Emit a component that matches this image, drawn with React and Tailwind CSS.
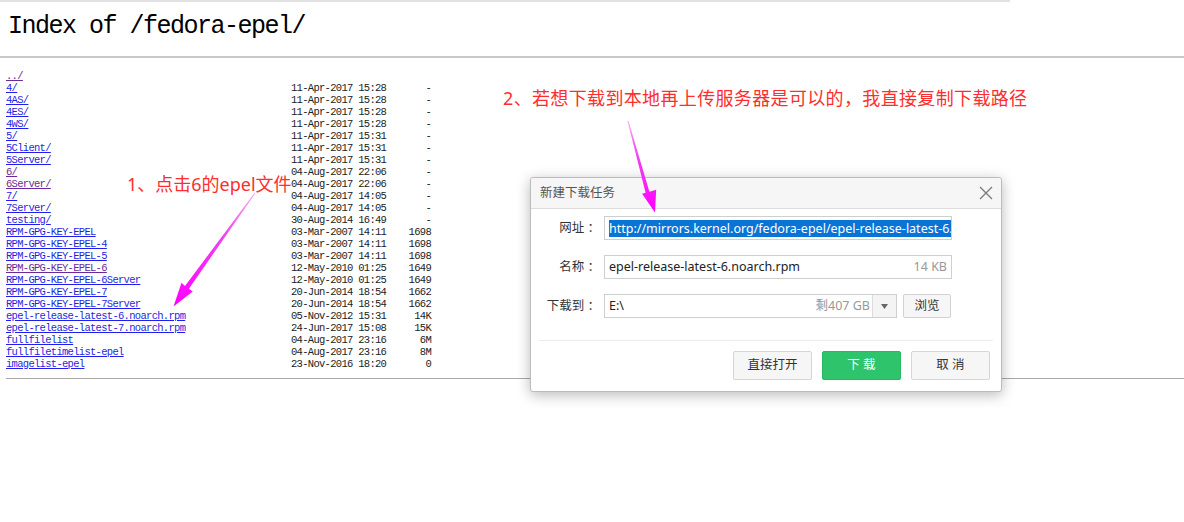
const rows = [
  ["../", "", "", true],
  ["4/", "11-Apr-2017 15:28", "-"],
  ["4AS/", "11-Apr-2017 15:28", "-"],
  ["4ES/", "11-Apr-2017 15:28", "-"],
  ["4WS/", "11-Apr-2017 15:28", "-"],
  ["5/", "11-Apr-2017 15:31", "-"],
  ["5Client/", "11-Apr-2017 15:31", "-"],
  ["5Server/", "11-Apr-2017 15:31", "-"],
  ["6/", "04-Aug-2017 22:06", "-", true],
  ["6Server/", "04-Aug-2017 22:06", "-", true],
  ["7/", "04-Aug-2017 14:05", "-"],
  ["7Server/", "04-Aug-2017 14:05", "-"],
  ["testing/", "30-Aug-2014 16:49", "-"],
  ["RPM-GPG-KEY-EPEL", "03-Mar-2007 14:11", "1698"],
  ["RPM-GPG-KEY-EPEL-4", "03-Mar-2007 14:11", "1698"],
  ["RPM-GPG-KEY-EPEL-5", "03-Mar-2007 14:11", "1698"],
  ["RPM-GPG-KEY-EPEL-6", "12-May-2010 01:25", "1649", true],
  ["RPM-GPG-KEY-EPEL-6Server", "12-May-2010 01:25", "1649"],
  ["RPM-GPG-KEY-EPEL-7", "20-Jun-2014 18:54", "1662"],
  ["RPM-GPG-KEY-EPEL-7Server", "20-Jun-2014 18:54", "1662"],
  ["epel-release-latest-6.noarch.rpm", "05-Nov-2012 15:31", "14K"],
  ["epel-release-latest-7.noarch.rpm", "24-Jun-2017 15:08", "15K"],
  ["fullfilelist", "04-Aug-2017 23:16", "6M"],
  ["fullfiletimelist-epel", "04-Aug-2017 23:16", "8M"],
  ["imagelist-epel", "23-Nov-2016 18:20", "0"],
]

const cjk = "font-['Noto_Sans','Noto_Sans_CJK_SC',sans-serif]"

const Arrows = () => (
  <svg className="absolute left-0 top-0 pointer-events-none" width="1184" height="522">
    <defs>
      <linearGradient id="ar1" x1="255" y1="193" x2="174" y2="306" gradientUnits="userSpaceOnUse">
        <stop offset="0" stopColor="#f7a6f7" />
        <stop offset="0.4" stopColor="#f040f0" />
        <stop offset="1" stopColor="#ff00ff" />
      </linearGradient>
      <linearGradient id="ar2" x1="628" y1="121" x2="655" y2="212" gradientUnits="userSpaceOnUse">
        <stop offset="0" stopColor="#f7a6f7" />
        <stop offset="0.4" stopColor="#f040f0" />
        <stop offset="1" stopColor="#ff00ff" />
      </linearGradient>
    </defs>
    <polygon
      fill="url(#ar1)"
      points="255.4,193.3 188.9,288.8 192.8,291.6 173.5,306.5 181.5,282.7 185.0,286.0 254.6,192.7"
    />
    <polygon
      fill="url(#ar2)"
      points="628.5,120.9 649.4,191.7 656.2,189.7 655,212.5 642.1,193.8 645.6,192.8 627.5,121.1"
    />
  </svg>
)

const Dialog = () => (
  <div className={`absolute left-[530px] top-[177px] w-[472px] h-[215px] bg-white border border-[#bcbcbc] rounded-[3px] shadow-[0_3px_14px_rgba(0,0,0,0.28)] ${cjk}`}>
    <div className="h-[31px] flex items-center justify-between pl-[9px] pr-[8px] bg-[#f6f6f6] border-b border-[#dcdcdc] rounded-t-[3px]">
      <span className="text-[12.5px] text-[#555]">新建下载任务</span>
      <svg width="14" height="14" viewBox="0 0 14 14">
        <path d="M1 1 L13 13 M13 1 L1 13" stroke="#7a7a7a" strokeWidth="1.3" fill="none" />
      </svg>
    </div>
    <div className="flex flex-col gap-[15px] pt-[7px]">
      <div className="flex items-center">
        <span className="w-[69px] text-right text-[12.5px] text-[#333]">网址 ：</span>
        <div className="ml-[4px] w-[348px] h-[24px] border border-[#cfcfcf] flex items-center pl-[4px] overflow-hidden whitespace-nowrap">
          <span className="bg-[#0a74d6] text-white text-[12.5px] leading-[17px] pr-px">http://mirrors.kernel.org/fedora-epel/epel-release-latest-6.noarch.rpm</span>
        </div>
      </div>
      <div className="flex items-center">
        <span className="w-[69px] text-right text-[12.5px] text-[#333]">名称 ：</span>
        <div className="ml-[4px] w-[348px] h-[24px] border border-[#cfcfcf] flex items-center justify-between pl-[4px] pr-[4px]">
          <span className="text-[12.5px] text-[#222]">epel-release-latest-6.noarch.rpm</span>
          <span className="text-[12.5px] text-[#999]">14 KB</span>
        </div>
      </div>
      <div className="flex items-center">
        <span className="w-[69px] text-right text-[12.5px] text-[#333]">下载到 ：</span>
        <div className="ml-[4px] w-[293px] h-[24px] border border-[#cfcfcf] flex items-center">
          <span className="flex-1 pl-[4px] text-[12.5px] text-[#222]">E:\</span>
          <span className="pr-[2px] text-[12.5px] text-[#999]">剩407 GB</span>
          <span className="w-[24px] h-full flex items-center justify-center bg-[#f4f4f4] border-l border-[#dcdcdc]">
            <svg width="7" height="5" viewBox="0 0 7 5"><path d="M0 0 H7 L3.5 5 Z" fill="#666" /></svg>
          </span>
        </div>
        <div className="ml-[6px] w-[48px] h-[24px] border border-[#d2d2d2] bg-[#f6f6f6] rounded-[2px] flex items-center justify-center text-[12.5px] text-[#333]">
          浏览
        </div>
      </div>
    </div>
    <div className="mt-[22px] mx-[8px] h-px bg-[#ececec]" />
    <div className="flex justify-end gap-[10px] pr-[11px] pt-[10px]">
      <div className="w-[79px] h-[29px] border border-[#d6d6d6] bg-[#f6f6f6] rounded-[2px] flex items-center justify-center text-[12.5px] text-[#333]">
        直接打开
      </div>
      <div className="w-[79px] h-[29px] border border-[#27b860] bg-[#2ec46c] rounded-[2px] flex items-center justify-center text-[12.5px] text-white">
        下 载
      </div>
      <div className="w-[79px] h-[29px] border border-[#d6d6d6] bg-[#f6f6f6] rounded-[2px] flex items-center justify-center text-[12.5px] text-[#333]">
        取 消
      </div>
    </div>
  </div>
)

const App = () => {
  return (
    <div className="relative w-[1184px] h-[522px] bg-white overflow-hidden">
      <div className="h-[2px] w-[1010px] bg-[#e2e2e2]" />
      <h1 className="mt-[11px] pl-2 text-[25px] leading-[28px] tracking-[-1.5px] text-black font-['Liberation_Mono',monospace]">
        Index of /fedora-epel/
      </h1>
      <div className="mt-[15px] h-[2px] bg-[#c9c9c9]" />
      <div className="mt-[12px] pl-[6px] font-['Liberation_Mono',monospace] text-[10.5px] leading-[12px] tracking-[-0.7px] text-[#222]">
        {rows.map(([name, date, size, visited]) => (
          <div key={name} className="flex h-[12px] whitespace-nowrap">
            <span className="w-[285px]">
              <a className={`underline ${visited ? "text-[#6a2a9a]" : "text-[#1f1fe8]"}`}>{name}</a>
            </span>
            <span className="w-[96px]">{date}</span>
            <span className="w-[44px] text-right">{size}</span>
          </div>
        ))}
      </div>
      <div className="mt-[8px] ml-[6px] h-px bg-[#a9a9a9]" />

      <div className={`absolute left-[127px] top-[172px] text-[18px] leading-[24px] text-[#ff2d2d] ${cjk}`}>
        1、点击6的epel文件
      </div>
      <div className={`absolute left-[503px] top-[86px] text-[18px] leading-[24px] tracking-[0.35px] text-[#ff2d2d] ${cjk}`}>
        2、若想下载到本地再上传服务器是可以的，我直接复制下载路径
      </div>
      <Dialog />
      <Arrows />
    </div>
  )
}

export default App
